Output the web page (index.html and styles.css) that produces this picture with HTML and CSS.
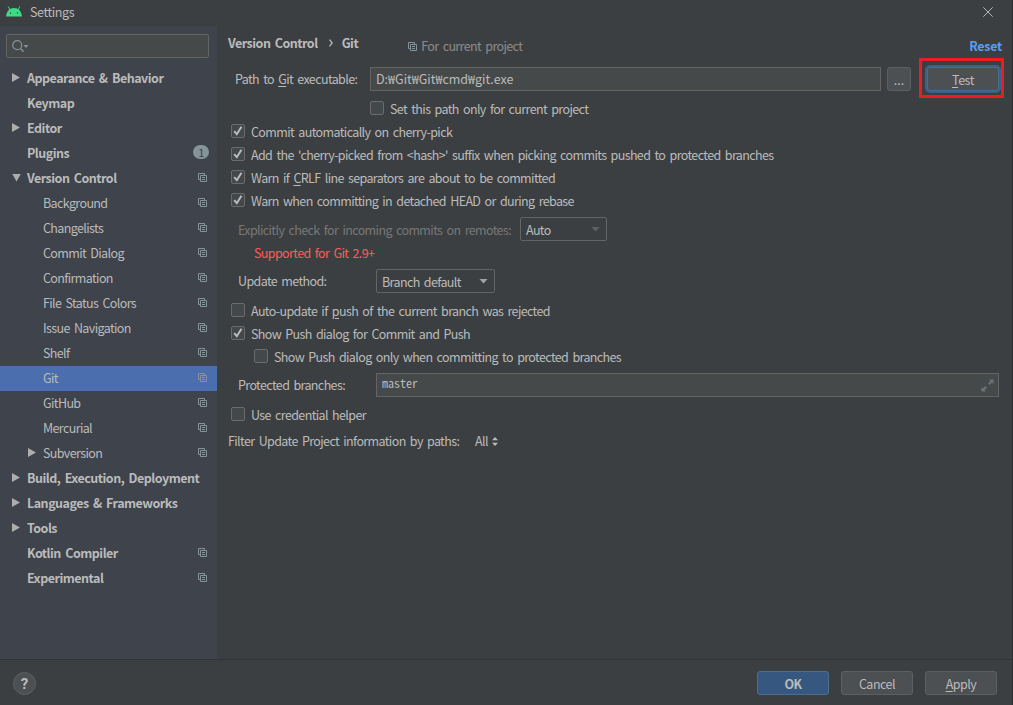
FILE: index.html
```
<!DOCTYPE html>
<html lang="en">
<head>
    <meta charset="UTF-8">
    <meta name="viewport" content="width=device-width, initial-scale=1.0">
    <title>Settings</title>
    <link rel="stylesheet" href="styles.css">
</head>
<body>
    <!-- shared icons -->
    <svg class="defs">
        <symbol id="copy" viewBox="0 0 9 9">
            <path d="M2 6.5H.5v-6h6V2" fill="none" stroke="currentColor"/>
            <path d="M2.5 2.5h6v6h-6zM4 4.5h3M4 6.5h3" fill="none" stroke="currentColor"/>
        </symbol>
        <symbol id="check" viewBox="1 1 12 12">
            <path d="M3.2 7.200l2.600 3 4.700-7.400" fill="none" stroke="#bbb" stroke-width="2"/>
        </symbol>
    </svg>

    <div class="window">
        <header class="titlebar">
            <svg class="android" width="16" height="11" viewBox="0 0 16 11">
                <path d="M0 10.500a8 8.500 0 0 1 16 0z" fill="#3ddc84"/>
                <path d="M2.2.5l2 3.900M13.800.5l-2 3.900" stroke="#3ddc84" stroke-width="1"/>
                <circle cx="4.500" cy="7" r=".7" fill="#30453a"/>
                <circle cx="11.500" cy="7" r=".7" fill="#30453a"/>
            </svg>
            <span class="title">Settings</span>
            <svg class="close" width="10" height="10" viewBox="0 0 10 10"><path d="M.3.3l9.4 9.4M9.7.3L.3 9.7" stroke="#b4b6b7"/></svg>
        </header>

        <div class="body">
            <nav class="sidebar">
                <div class="search">
                    <svg width="17" height="13" viewBox="0 0 17 13">
                        <circle cx="5.2" cy="5.2" r="4.5" fill="none" stroke="#87939a" stroke-width="1.2"/>
                        <path d="M8.3 8.3l3.2 3.4" stroke="#87939a" stroke-width="1.5"/>
                        <path d="M11.5 5h5L14 8z" fill="#87939a"/>
                    </svg>
                </div>
                <ul class="tree">
                    <li class="top"><i class="arrow"></i><span>Appearance &amp; Behavior</span></li>
                    <li class="top"><span>Keymap</span></li>
                    <li class="top"><i class="arrow"></i><span>Editor</span></li>
                    <li class="top"><span>Plugins</span><b class="count">1</b></li>
                    <li class="top"><i class="arrow open"></i><span>Version Control</span><svg class="copy"><use href="#copy"/></svg></li>
                    <li><span>Background</span><svg class="copy"><use href="#copy"/></svg></li>
                    <li><span>Changelists</span><svg class="copy"><use href="#copy"/></svg></li>
                    <li><span>Commit Dialog</span><svg class="copy"><use href="#copy"/></svg></li>
                    <li><span>Confirmation</span><svg class="copy"><use href="#copy"/></svg></li>
                    <li><span>File Status Colors</span><svg class="copy"><use href="#copy"/></svg></li>
                    <li><span>Issue Navigation</span><svg class="copy"><use href="#copy"/></svg></li>
                    <li><span>Shelf</span><svg class="copy"><use href="#copy"/></svg></li>
                    <li class="selected"><span>Git</span><svg class="copy"><use href="#copy"/></svg></li>
                    <li><span>GitHub</span><svg class="copy"><use href="#copy"/></svg></li>
                    <li><span>Mercurial</span><svg class="copy"><use href="#copy"/></svg></li>
                    <li><i class="arrow"></i><span>Subversion</span><svg class="copy"><use href="#copy"/></svg></li>
                    <li class="top"><i class="arrow"></i><span>Build, Execution, Deployment</span></li>
                    <li class="top"><i class="arrow"></i><span>Languages &amp; Frameworks</span></li>
                    <li class="top"><i class="arrow"></i><span>Tools</span></li>
                    <li class="top"><span>Kotlin Compiler</span><svg class="copy"><use href="#copy"/></svg></li>
                    <li class="top"><span>Experimental</span><svg class="copy"><use href="#copy"/></svg></li>
                </ul>
            </nav>

            <main class="content">
                <div class="crumbs">
                    <b>Version Control</b>
                    <svg class="sep" width="4" height="8" viewBox="0 0 4 8"><path d="M.5.7L3.2 4 .5 7.3" fill="none" stroke="#bbb" stroke-width="1.2"/></svg>
                    <b>Git</b>
                    <span class="scope"><svg class="copy"><use href="#copy"/></svg>For current project</span>
                    <a class="reset">Reset</a>
                </div>

                <div class="row path-row">
                    <label class="path-label">Path to <u>G</u>it executable:</label>
                    <div class="input path">D:₩Git₩Git₩cmd₩git.exe</div>
                    <button class="btn browse">...</button>
                    <div class="test-wrap"><button class="btn test"><span><u>T</u>est</span></button></div>
                </div>

                <div class="check only-project"><i class="box"></i><span>Set this path only for current project</span></div>
                <div class="check"><svg class="box"><use href="#check"/></svg><span>Commit automatically on cherry-pick</span></div>
                <div class="check"><svg class="box"><use href="#check"/></svg><span>Add the 'cherry-picked from &lt;hash&gt;' suffix when picking commits pushed to protected branches</span></div>
                <div class="check"><svg class="box"><use href="#check"/></svg><span>Warn if <u>C</u>RLF line separators are about to be committed</span></div>
                <div class="check"><svg class="box"><use href="#check"/></svg><span>Warn when committing in detached HEAD or during rebase</span></div>

                <div class="row remote-row">
                    <label class="disabled">Explicitly check for incoming commits on remotes:</label>
                    <div class="combo auto">Auto<i class="drop dim"></i></div>
                </div>
                <div class="error">Supported for Git 2.9+</div>
                <div class="row update-row">
                    <label>Update method:</label>
                    <div class="combo">Branch default<i class="drop"></i></div>
                </div>

                <div class="check spaced"><i class="box"></i><span>Auto-update if <u>p</u>ush of the current branch was rejected</span></div>
                <div class="check"><svg class="box"><use href="#check"/></svg><span>Show Push dialog for Commit and Push</span></div>
                <div class="check nested"><i class="box"></i><span>Show Push dialog only when committing to protected branches</span></div>

                <div class="row protected-row">
                    <label>Protected branches:</label>
                    <div class="input branches">
                        <span>master</span>
                        <svg width="13" height="13" viewBox="0 0 13 13">
                            <path d="M8 .5h4.500V5L11 3.500 8.500 6 7 4.500 9.500 2zM.5 8v4.500H5L3.500 11 6 8.500 4.500 7 2 9.500z" fill="#6a757b"/>
                        </svg>
                    </div>
                </div>

                <div class="check spaced"><i class="box"></i><span>Use credential helper</span></div>
                <div class="filter">
                    <span class="filter-label">Filter Update Project information by paths:</span>
                    <span class="all">All</span>
                    <svg width="6" height="9" viewBox="0 0 6 9"><path d="M3 0l3 3.200H0zM3 9L0 5.800h6z" fill="#bbb"/></svg>
                </div>
            </main>
        </div>

        <footer class="footer">
            <button class="help">?</button>
            <button class="btn ok">OK</button>
            <button class="btn">Cancel</button>
            <button class="btn"><span><u>A</u>pply</span></button>
        </footer>
    </div>
</body>
</html>
```
FILE: styles.css
```
* {
    box-sizing: border-box;
}
body {
    margin: 0;
    background: #3c3f41;
    color: #bbbbbb;
    font-family: "Noto Sans CJK KR", "Noto Sans", sans-serif;
    font-size: 12.5px;
    line-height: 16px;
    letter-spacing: -0.62px;
    word-spacing: 2px;
    white-space: nowrap;
    overflow: hidden;
}
.defs {
    display: none;
}
.window {
    width: 1013px;
    height: 705px;
    display: flex;
    flex-direction: column;
    border-right: 1px solid #292d30;
}
.titlebar {
    height: 26px;
    display: flex;
    align-items: center;
    padding: 0 19px 3px 6px;
}
.title {
    margin-left: 8px;
    letter-spacing: -0.4px;
}
.close {
    margin-left: auto;
}
.body {
    flex: 1;
    display: flex;
    min-height: 0;
}

/* sidebar */
.sidebar {
    width: 217px;
    background: #3e434c;
    padding-top: 8px;
}
.search {
    width: 203px;
    height: 24px;
    margin-left: 6px;
    padding: 5px;
    border: 1px solid #646464;
    border-radius: 2px;
    background: #45494a;
}
.search svg {
    display: block;
}
.tree {
    list-style: none;
    margin: 8px 0 0;
    padding: 0;
}
.tree li {
    height: 25px;
    display: flex;
    align-items: center;
    padding: 0 10px 0 27px;
}
.tree li span {
    padding: 0 0 2px 16px;
}
.tree .top span {
    padding-left: 0;
    font-weight: 700;
    letter-spacing: -0.5px;
}
.tree .selected {
    background: #4b6eaf;
}
.arrow {
    width: 8px;
    height: 9px;
    margin: 0 7px 2px 1px;
    background: #adadad;
    clip-path: polygon(0 0, 100% 50%, 0 100%);
}
.top .arrow {
    margin-left: -15px;
}
.arrow + span {
    margin-left: -16px;
}
.top .arrow + span {
    margin-left: 0;
}
.arrow.open {
    width: 9px;
    height: 8px;
    margin-right: 6px;
    clip-path: polygon(0 0, 100% 0, 50% 100%);
}
.copy {
    width: 9px;
    height: 9px;
    color: #87939a;
}
.tree .copy {
    margin: 0 0 2px auto;
}
.count {
    width: 16px;
    height: 14px;
    margin: 0 -2px 3px auto;
    border-radius: 7px;
    background: #87939a;
    color: #3e434c;
    font-size: 11px;
    font-weight: 400;
    line-height: 15px;
    text-align: center;
}

/* content */
.content {
    flex: 1;
    padding: 0 13px 0 11px;
}
.crumbs {
    height: 41px;
    display: flex;
    padding-top: 9px;
}
.crumbs b {
    letter-spacing: -0.5px;
}
.sep {
    margin: 4px 9px 0 11px;
}
.scope {
    margin-left: 50px;
    padding-top: 3px;
    color: #8c8c8c;
}
.scope .copy {
    margin-right: 4px;
}
.reset {
    margin-left: auto;
    margin-right: -3px;
    padding-top: 3px;
    color: #589df6;
    font-weight: 700;
    letter-spacing: -0.3px;
}
.row {
    height: 24px;
    display: flex;
    align-items: center;
    padding-left: 10px;
}
.path-row {
    padding-left: 7px;
}
.path-label {
    width: 135px;
}
.row label {
    padding-bottom: 1px;
}
.input {
    height: 24px;
    padding: 3px 5px;
    border: 1px solid #646464;
    background: #45494a;
}
.path {
    width: 511px;
    letter-spacing: 0;
}
.btn {
    width: 72px;
    height: 24px;
    padding: 2px 0 0;
    border: 1px solid #5e6060;
    border-radius: 3px;
    background: #4c5052;
    color: #bbbbbb;
    font: inherit;
    letter-spacing: -0.5px;
}
.browse {
    width: 24px;
    margin-left: 6px;
    letter-spacing: 0;
}
.test-wrap {
    position: relative;
    margin-left: 16px;
}
/* red marker around the Test button */
.test-wrap::after {
    content: "";
    box-sizing: border-box;
    position: absolute;
    left: -8px;
    top: -9px;
    width: 85px;
    height: 40px;
    border: 3px solid #ed1c24;
}
.test {
    border-color: #466d94;
    box-shadow: 0 0 0 2px #3d6185;
}
.check {
    height: 23px;
    display: flex;
    padding-left: 3px;
}
.check span {
    padding: 4px 0 0 6px;
}
.box {
    width: 14px;
    height: 14px;
    margin-top: 4px;
    border: 1px solid #6b6b6b;
    border-radius: 2px;
    background: #43494a;
}
.only-project {
    margin-top: 6px;
    padding-left: 142px;
}
.nested {
    padding-left: 26px;
}
.spaced {
    margin-top: 6px;
}
.remote-row {
    margin-top: 5px;
}
.row .disabled {
    width: 282px;
    padding-top: 1px;
    padding-bottom: 0;
    color: #777777;
}
.combo {
    width: 119px;
    height: 24px;
    display: flex;
    align-items: center;
    justify-content: space-between;
    padding: 2px 6px 0 5px;
    border: 1px solid #646464;
    border-radius: 2px;
}
.auto {
    width: 87px;
}
.drop {
    width: 9px;
    height: 5px;
    margin-bottom: 2px;
    background: #a0a2a3;
    clip-path: polygon(0 0, 100% 0, 50% 100%);
}
.dim {
    background: #5f6162;
}
.error {
    height: 25px;
    padding: 4px 0 0 26px;
    color: #ff5b5b;
}
.update-row {
    margin-top: 3px;
}
.update-row label,
.protected-row label {
    width: 138px;
}
.protected-row {
    margin-top: 5px;
}
.branches {
    width: 623px;
    display: flex;
    justify-content: space-between;
    padding: 1px 4px 0 5px;
    font-family: "Noto Sans Mono CJK KR", "Liberation Mono", monospace;
    font-size: 12px;
    letter-spacing: 0;
}
.branches svg {
    margin-top: 4px;
}
.filter {
    height: 22px;
    margin-top: 4px;
    display: flex;
    align-items: center;
}
.filter-label {
    width: 247px;
}
.all {
    width: 17px;
}

/* footer */
.footer {
    height: 46px;
    display: flex;
    align-items: flex-start;
    gap: 12px;
    padding: 11px 15px 0 13px;
    border-top: 1px solid #313335;
}
.help {
    width: 23px;
    height: 23px;
    margin: 1px auto 0 0;
    padding: 0;
    border: 1px solid #5e6060;
    border-radius: 50%;
    background: #4c5052;
    color: #bbbbbb;
    font: 700 15px/20px Roboto, sans-serif;
}
.ok {
    border-color: #4c708c;
    background: #365880;
    font-weight: 700;
}
u {
    text-underline-offset: 2px;
}
```
